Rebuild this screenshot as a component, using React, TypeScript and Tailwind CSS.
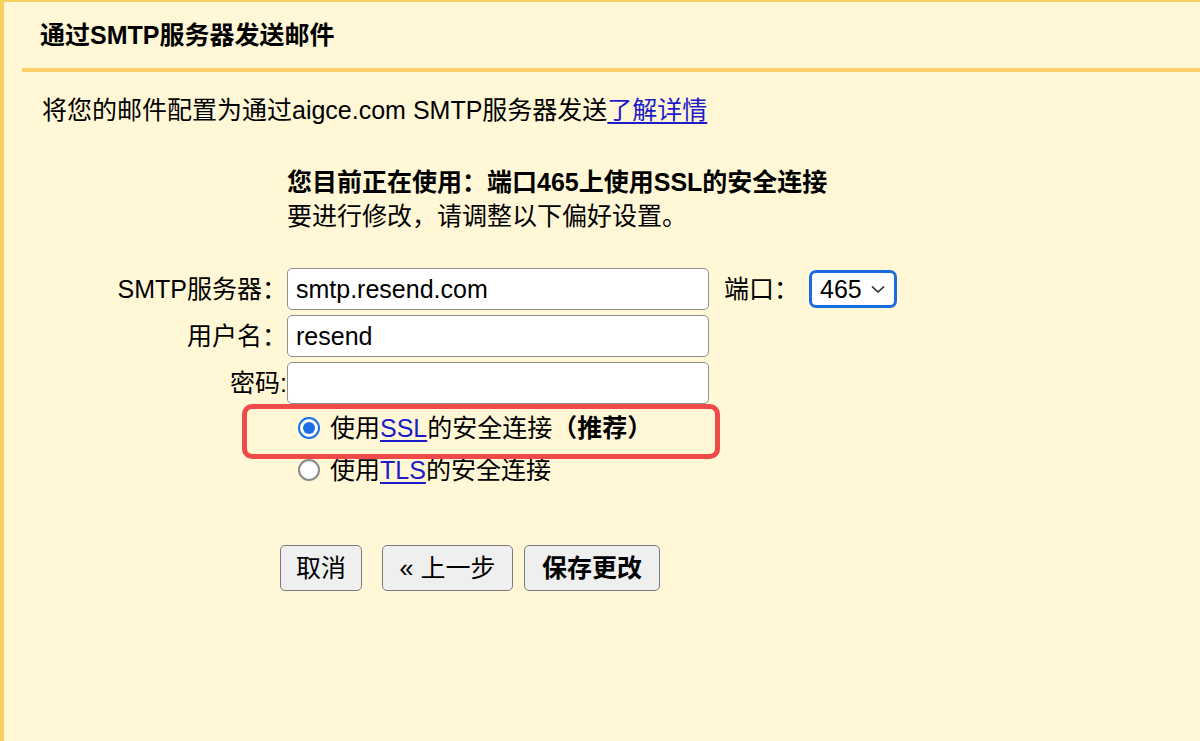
import { useState } from 'react';

const FONT = 'font-["Liberation_Sans","Noto_Sans_CJK_SC",sans-serif]';

type RadioProps = {
  checked: boolean;
  onSelect: () => void;
  children: React.ReactNode;
};

function Radio({ checked, onSelect, children }: RadioProps) {
  return (
    <label className="flex items-center h-[42px] cursor-pointer" onClick={onSelect}>
      <span
        className={`flex items-center justify-center w-[22px] h-[22px] rounded-full border-2 bg-white mr-[10px] ${
          checked ? 'border-[#1a6fe6]' : 'border-[#8a8a8a]'
        }`}
      >
        {checked && <span className="w-[12px] h-[12px] rounded-full bg-[#1a6fe6]" />}
      </span>
      <span>{children}</span>
    </label>
  );
}

/**
 * SMTP sending settings form: server, port, credentials, secure connection choice
 */
export default function App() {
  const [secure, setSecure] = useState<'ssl' | 'tls'>('ssl');

  return (
    <div className={`${FONT} relative w-full h-[741px] bg-[#fff7d6] border-l-4 border-t-2 border-[#f9cf5f] text-black text-[25px] leading-[34px] overflow-hidden`}>
      {/* Header */}
      <div className="h-[66px] flex items-center pl-[36px]">
        <h1 className="font-bold text-[25px]">通过SMTP服务器发送邮件</h1>
      </div>
      <div className="ml-[18px] h-[4px] bg-[#f9cf66]" />

      <p className="pt-[21px] pl-[38px]">
        将您的邮件配置为通过aigce.com SMTP服务器发送
        <a href="#" className="text-[#1c1cc8] underline underline-offset-[3px]">了解详情</a>
      </p>

      <div className="ml-[283px] mt-[38px]">
        <div className="font-bold">您目前正在使用：端口465上使用SSL的安全连接</div>
        <div>要进行修改，请调整以下偏好设置。</div>
      </div>

      {/* Form */}
      <div className="mt-[35px] flex flex-col gap-[5px]">
        <div className="flex items-center">
          <span className="w-[283px] text-right">SMTP服务器：</span>
          <input
            defaultValue="smtp.resend.com"
            className="w-[422px] h-[42px] px-[8px] bg-white border border-[#8f8f8f] rounded-[5px] outline-none"
          />
          <span className="ml-[15px]">端口：</span>
          <div className="ml-[10px] flex items-center w-[88px] h-[38px] px-[8px] border-[3px] border-[#1b6ce0] rounded-[7px] bg-white">
            <span>465</span>
            <svg className="ml-auto w-[16px] h-[16px]" viewBox="0 0 16 16" fill="none" stroke="#222" strokeWidth="1.6">
              <path d="M2 5.5l6 5.5 6-5.5" />
            </svg>
          </div>
        </div>
        <div className="flex items-center">
          <span className="w-[283px] text-right">用户名：</span>
          <input
            defaultValue="resend"
            className="w-[422px] h-[42px] px-[8px] bg-white border border-[#8f8f8f] rounded-[5px] outline-none"
          />
        </div>
        <div className="flex items-center">
          <span className="w-[283px] text-right">密码:</span>
          <input
            type="password"
            className="w-[422px] h-[42px] px-[8px] bg-white border border-[#8f8f8f] rounded-[5px] outline-none"
          />
        </div>
      </div>

      <div className="mt-[3px] ml-[294px]">
        <Radio checked={secure === 'ssl'} onSelect={() => setSecure('ssl')}>
          使用<a href="#" className="text-[#1c1cc8] underline underline-offset-[3px]">SSL</a>的安全连接<b>（推荐）</b>
        </Radio>
        <Radio checked={secure === 'tls'} onSelect={() => setSecure('tls')}>
          使用<a href="#" className="text-[#1c1cc8] underline underline-offset-[3px]">TLS</a>的安全连接
        </Radio>
      </div>

      <div className="mt-[54px] ml-[276px] flex">
        <button className="h-[46px] w-[82px] bg-[#efefef] border border-[#7a7a7a] rounded-[5px]">取消</button>
        <button className="ml-[20px] h-[46px] w-[131px] bg-[#efefef] border border-[#7a7a7a] rounded-[5px]">« 上一步</button>
        <button className="ml-[11px] h-[46px] w-[136px] bg-[#efefef] border border-[#7a7a7a] rounded-[5px] font-bold">保存更改</button>
      </div>

      {/* Highlight around the recommended option */}
      <div className="absolute left-[238px] top-[402px] w-[478px] h-[55px] border-[5px] border-[#ee4a4a] rounded-[10px] pointer-events-none" />
    </div>
  );
}
